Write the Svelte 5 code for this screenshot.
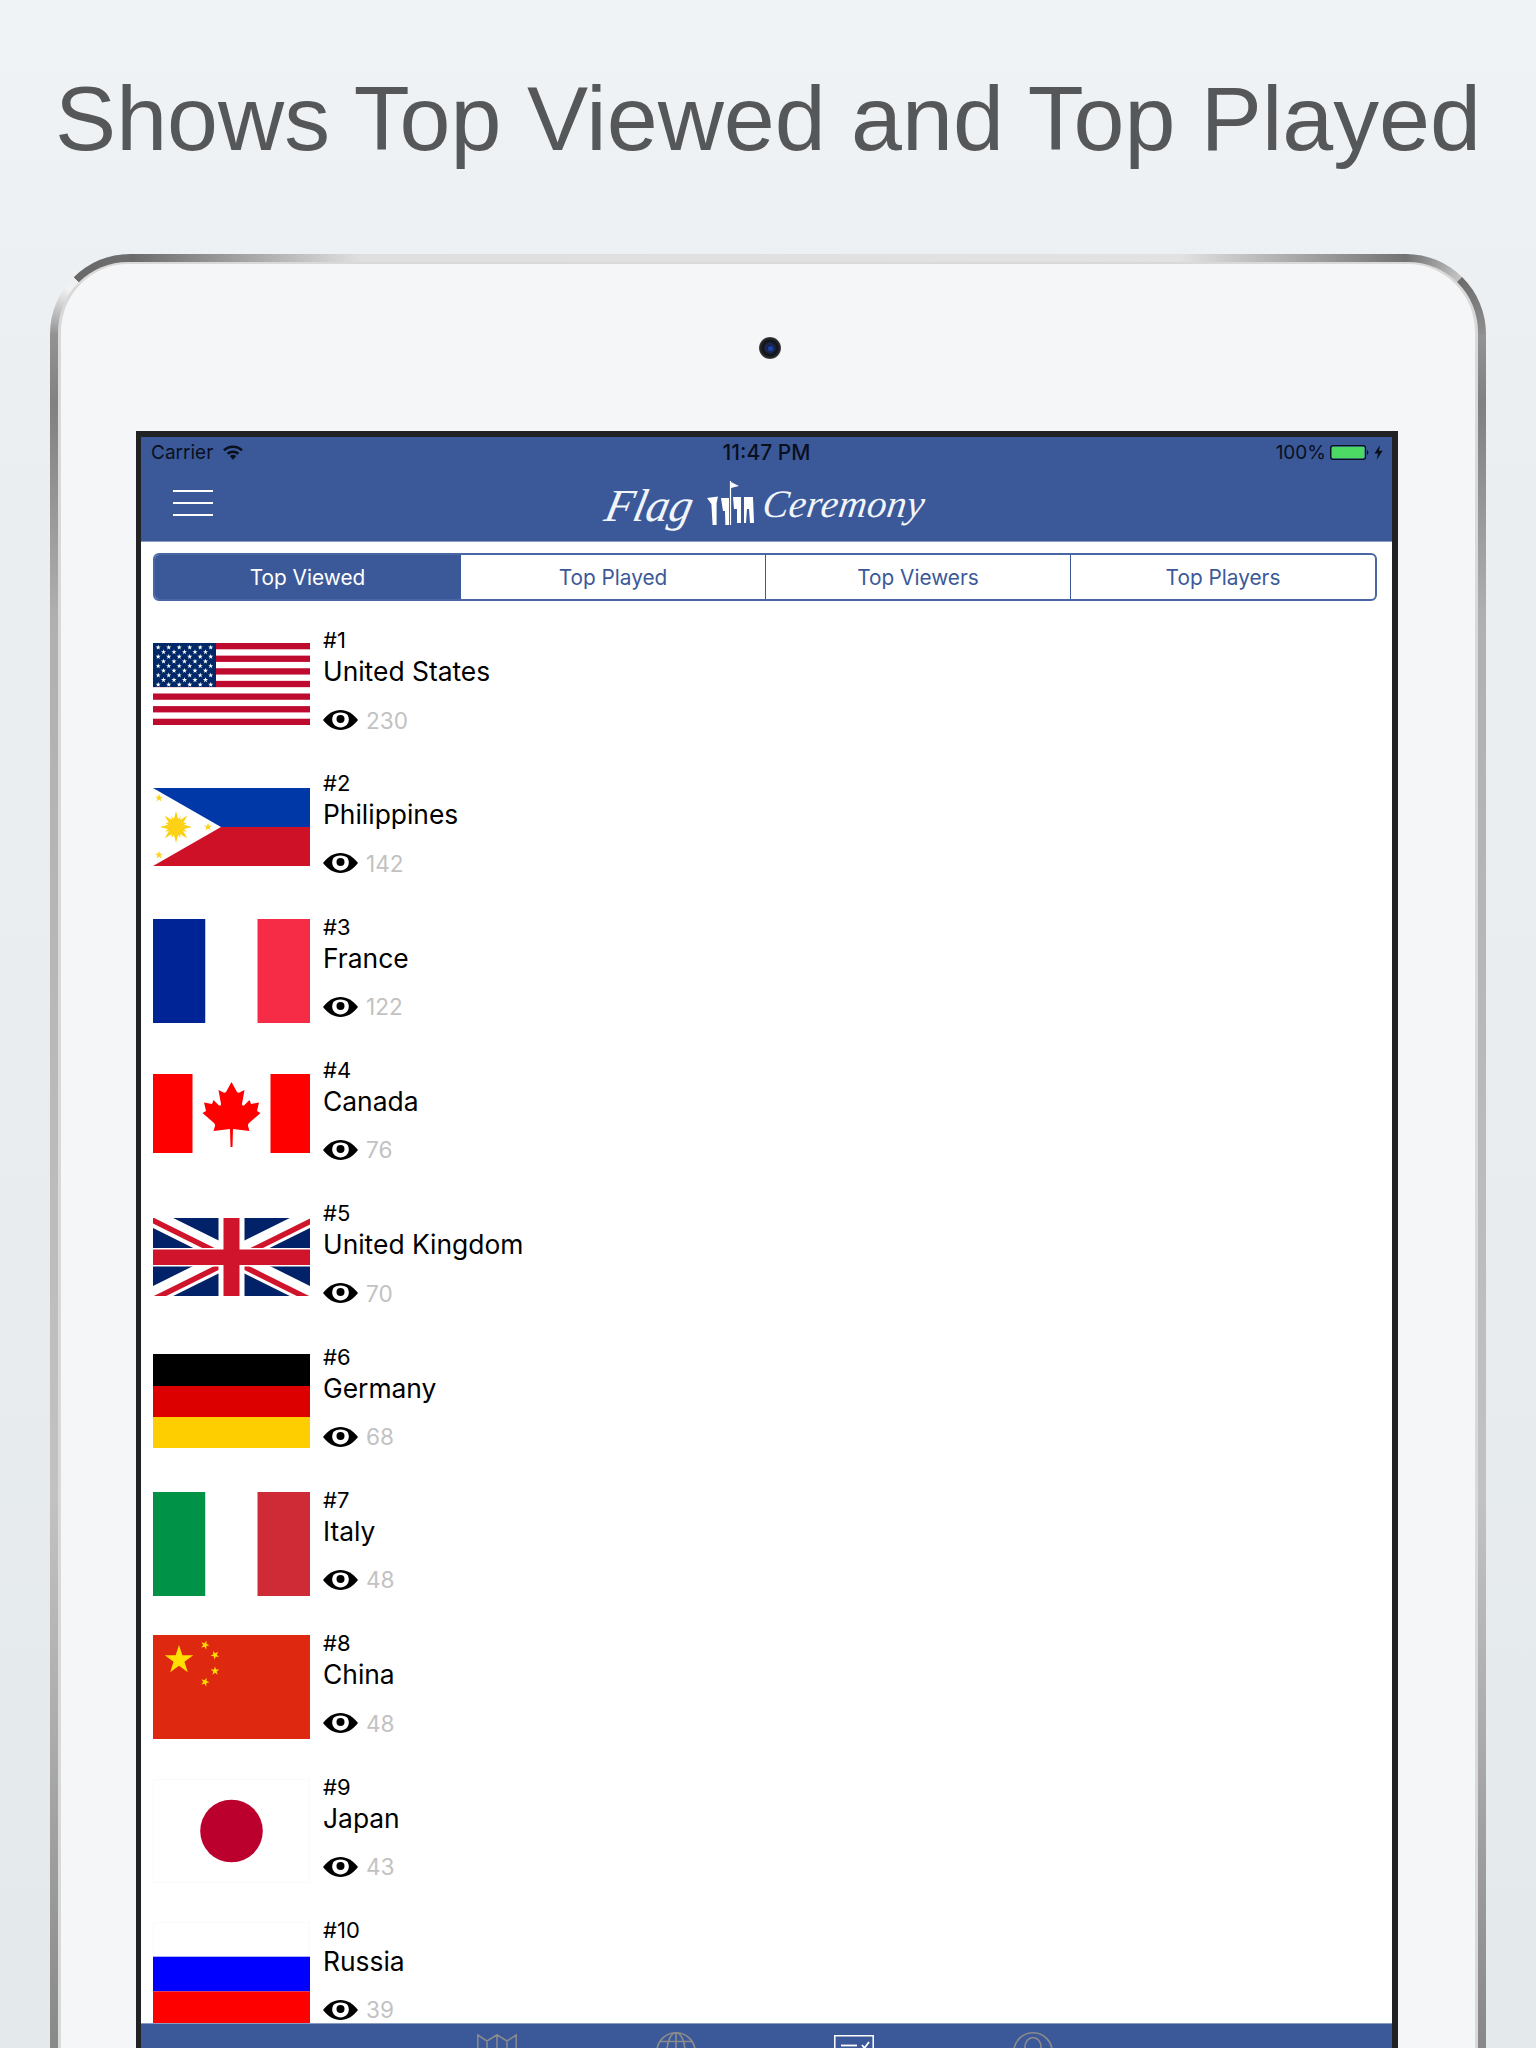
<script>
  const rows = [
    { n: 1, name: 'United States', views: 230, flag: 'us' },
    { n: 2, name: 'Philippines', views: 142, flag: 'ph' },
    { n: 3, name: 'France', views: 122, flag: 'fr' },
    { n: 4, name: 'Canada', views: 76, flag: 'ca' },
    { n: 5, name: 'United Kingdom', views: 70, flag: 'uk' },
    { n: 6, name: 'Germany', views: 68, flag: 'de' },
    { n: 7, name: 'Italy', views: 48, flag: 'it' },
    { n: 8, name: 'China', views: 48, flag: 'cn' },
    { n: 9, name: 'Japan', views: 43, flag: 'jp' },
    { n: 10, name: 'Russia', views: 39, flag: 'ru' }
  ];
  const tabs = ['Top Viewed', 'Top Played', 'Top Viewers', 'Top Players'];
  const star = (cx, cy, r, rot = 0) => {
    const pts = [];
    for (let i = 0; i < 10; i++) {
      const a = ((-90 + rot + i * 36) * Math.PI) / 180;
      const q = i % 2 ? r * 0.382 : r;
      pts.push((cx + q * Math.cos(a)).toFixed(2) + ',' + (cy + q * Math.sin(a)).toFixed(2));
    }
    return pts.join(' ');
  };
  const usStars = [];
  for (let y = 0; y < 9; y++) {
    const count = y % 2 ? 5 : 6;
    for (let x = 0; x < count; x++) {
      usStars.push([(y % 2 ? 10.5 : 5.2) + x * 10.5, 4.4 + y * 4.65]);
    }
  }
  const sunRays = Array.from({ length: 8 }, (_, i) => i * 45);
</script>

<div class="page">
  <h1 class="title">Shows Top Viewed and Top Played</h1>
  <div class="device">
    <div class="face">
      <div class="camera"><span class="lens"></span></div>
      <div class="screen">
        <div class="navbar">
          <div class="status">
            <div class="status-left">
              <span>Carrier</span>
              <svg width="20" height="15" viewBox="0 0 20 15">
                <path d="M1 5.4 A13 13 0 0 1 19 5.4" fill="none" stroke="#0a0f1e" stroke-width="2.6" />
                <path d="M4.6 8.8 A8 8 0 0 1 15.4 8.8" fill="none" stroke="#0a0f1e" stroke-width="2.6" />
                <path d="M6.8 11 Q10 8.4 13.2 11 L10 14.8 Z" fill="#0a0f1e" />
              </svg>
            </div>
            <span class="clock">11:47 PM</span>
            <div class="status-right">
              <span>100%</span>
              <svg class="battery" width="40" height="15" viewBox="0 0 40 15">
                <rect x="0.6" y="0.6" width="35" height="13.8" rx="2.5" fill="none" stroke="#0a0f1e" stroke-width="1.1" />
                <rect x="1.8" y="1.8" width="32.6" height="11.4" rx="1.4" fill="#4cd964" />
                <path d="M37 5 a3 3 0 0 1 0 5 z" fill="#0a0f1e" />
              </svg>
              <svg width="9" height="15" viewBox="0 0 9 15"><path d="M6 0 L0.5 8.4 H4 L2.6 15 L8.6 5.8 H5 Z" fill="#0a0f1e" /></svg>
            </div>
          </div>
          <div class="bar">
            <div class="burger"><i></i><i></i><i></i></div>
            <div class="logo">
              <span class="script flag-word">Flag</span>
              <svg class="guard" width="50" height="46" viewBox="0 0 50 46">
                <path d="M24.5 0 V44" stroke="#ffffff" stroke-width="1.2" />
                <path d="M25 1 L33 5 L25 7 Z" fill="#ffffff" />
                <g fill="#ffffff">
                  <path d="M1 17 L12 15.6 L10.6 22 V44 H6.6 L5.4 23 Z" />
                  <path d="M15 17 H23 V44 H19.4 L19 30 H17 Z" />
                  <path d="M27 16 H35 V42 H31 L31 28 H28 Z" />
                  <path d="M38 16 H47 L48 42 H44 L43 28 H41 L40 42 H38 Z" />
                </g>
              </svg>
              <span class="script cer-word">Ceremony</span>
            </div>
          </div>
        </div>

        <div class="segments">
          {#each tabs as tab, i}
            <div class="segment" class:active={i === 0}>{tab}</div>
          {/each}
        </div>

        <div class="list">
          {#each rows as row}
            <div class="row">
              <div class="flagbox">
                {#if row.flag === 'us'}
                  <svg width="157" height="82" viewBox="0 0 157 82" preserveAspectRatio="none">
                    <rect width="157" height="82" fill="#fff" />
                    {#each [0, 1, 2, 3, 4, 5, 6] as s}
                      <rect y={s * 12.62} width="157" height="6.31" fill="#bf0a30" />
                    {/each}
                    <rect width="63" height="44" fill="#002868" />
                    {#each usStars as p}
                      <polygon points={star(p[0], p[1], 2.7)} fill="#fff" />
                    {/each}
                  </svg>
                {:else if row.flag === 'ph'}
                  <svg width="157" height="78" viewBox="0 0 157 78">
                    <rect width="157" height="39" fill="#0038a8" />
                    <rect y="39" width="157" height="39" fill="#ce1126" />
                    <polygon points="0,0 68,39 0,78" fill="#fff" />
                    <g fill="#fcd116">
                      <circle cx="23" cy="39" r="8.5" />
                      {#each sunRays as r}
                        <polygon points="20.6,32 23,23 25.4,32" transform="rotate({r} 23 39)" />
                        <polygon points="21.6,32 23,27 24.4,32" transform="rotate({r + 22.5} 23 39)" />
                      {/each}
                      <polygon points={star(6, 10, 4.2)} />
                      <polygon points={star(6, 67, 4.2)} />
                      <polygon points={star(55, 39, 4.2)} />
                    </g>
                  </svg>
                {:else if row.flag === 'fr'}
                  <svg width="157" height="104" viewBox="0 0 157 104">
                    <rect width="52.5" height="104" fill="#002395" />
                    <rect x="52.5" width="52" height="104" fill="#fff" />
                    <rect x="104.5" width="52.5" height="104" fill="#f62b45" />
                  </svg>
                {:else if row.flag === 'ca'}
                  <svg width="157" height="79" viewBox="0 0 157 79">
                    <rect width="157" height="79" fill="#fff" />
                    <rect width="39.5" height="79" fill="#ff0000" />
                    <rect x="117.5" width="39.5" height="79" fill="#ff0000" />
                    <path fill="#ff0000" d="M78.5 8 L84 18 Q85.5 19.5 87.5 18 L91.5 16 L89 30 Q89 32.5 91.5 31 L96.5 26 L98 30 L106 28.5 L104 37 L107.5 39 L96 49 Q94.5 51 95 52 L96.5 57 L80 55 L79.5 73 H77.5 L77 55 L60.5 57 L62 52 Q62.5 51 61 49 L49.5 39 L53 37 L51 28.5 L59 30 L60.5 26 L65.5 31 Q68 32.5 68 30 L65.5 16 L69.5 18 Q71.5 19.5 73 18 Z" />
                  </svg>
                {:else if row.flag === 'uk'}
                  <svg width="157" height="78" viewBox="0 0 157 78">
                    <rect width="157" height="78" fill="#012169" />
                    <path d="M0 0 L157 78 M157 0 L0 78" stroke="#fff" stroke-width="18" />
                    <path d="M0 -1 L78.5 38 M78.5 39 L157 78" stroke="#cf142b" stroke-width="5.5" transform="translate(-2 2.5)" />
                    <path d="M157 0 L78.5 39 M78.5 39 L0 78" stroke="#cf142b" stroke-width="5.5" transform="translate(2 2.5)" />
                    <rect x="65.5" width="26" height="78" fill="#fff" />
                    <rect y="30" width="157" height="18.5" fill="#fff" />
                    <rect x="70.5" width="16" height="78" fill="#cf142b" />
                    <rect y="31.5" width="157" height="15.5" fill="#cf142b" />
                  </svg>
                {:else if row.flag === 'de'}
                  <svg width="157" height="94" viewBox="0 0 157 94">
                    <rect width="157" height="32" fill="#000" />
                    <rect y="32" width="157" height="31" fill="#dd0000" />
                    <rect y="63" width="157" height="31" fill="#ffce00" />
                  </svg>
                {:else if row.flag === 'it'}
                  <svg width="157" height="104" viewBox="0 0 157 104">
                    <rect width="52.5" height="104" fill="#009246" />
                    <rect x="52.5" width="52" height="104" fill="#fff" />
                    <rect x="104.5" width="52.5" height="104" fill="#ce2b37" />
                  </svg>
                {:else if row.flag === 'cn'}
                  <svg width="157" height="104" viewBox="0 0 157 104">
                    <rect width="157" height="104" fill="#de2910" />
                    <g fill="#ffde00">
                      <polygon points={star(26, 25, 15)} />
                      <polygon points={star(52, 10, 4.6, 20)} />
                      <polygon points={star(62, 20, 4.6, 45)} />
                      <polygon points={star(62, 36, 4.6, 0)} />
                      <polygon points={star(52, 47, 4.6, 20)} />
                    </g>
                  </svg>
                {:else if row.flag === 'jp'}
                  <svg width="157" height="104" viewBox="0 0 157 104">
                    <rect x="0.5" y="0.5" width="156" height="103" fill="#fff" stroke="#fafafa" />
                    <circle cx="78.5" cy="52" r="31.3" fill="#bc002d" />
                  </svg>
                {:else}
                  <svg width="157" height="104" viewBox="0 0 157 104">
                    <rect x="0.5" y="0.5" width="156" height="34.5" fill="#fff" stroke="#fafafa" />
                    <rect y="34.7" width="157" height="34.7" fill="#0000ff" />
                    <rect y="69.4" width="157" height="34.7" fill="#ff0000" />
                  </svg>
                {/if}
              </div>
              <div class="info">
                <div class="rank">#{row.n}</div>
                <div class="name">{row.name}</div>
                <div class="views">
                  <svg width="35" height="20" viewBox="0 0 35 20">
                    <path fill="#000" d="M0 10 C5 3.4 11 0 17.5 0 S30 3.4 35 10 C30 16.6 24 20 17.5 20 S5 16.6 0 10 Z" />
                    <path fill="#fff" d="M10.4 5 C9.6 6.4 9.2 8 9.2 9.6 C9.2 14.2 12.9 17.4 17.5 17.4 S25.8 14.2 25.8 9.6 C25.8 8 25.4 6.4 24.6 5 C23.2 3.4 20.6 2.4 17.5 2.4 S11.8 3.4 10.4 5 Z" />
                    <circle cx="17.5" cy="9" r="4" fill="#000" />
                  </svg>
                  <span>{row.views}</span>
                </div>
              </div>
            </div>
          {/each}
        </div>

        <div class="tabbar">
          <svg class="map" width="40" height="25" viewBox="0 0 40 25" fill="none" stroke="#8c8c8c" stroke-width="1.5">
            <path d="M0.8 25 V1 L10 7 L20 0.8 L30 7 L39.2 1 V25 M10 7 V25 M20 0.8 V25 M30 7 V25" />
          </svg>
          <svg width="40" height="25" viewBox="0 0 40 25" fill="none" stroke="#8c8c8c" stroke-width="1.6">
            <circle cx="20" cy="20" r="19.2" />
            <ellipse cx="20" cy="20" rx="9" ry="19.2" />
            <path d="M20 0.8 V25 M4 9.5 H36 M0.8 20 H39.2" />
          </svg>
          <svg class="form" width="40" height="22" viewBox="0 0 40 22" fill="none" stroke="#ffffff" stroke-width="1.5">
            <path d="M0.8 22 V0.8 H39.2 V22" />
            <path d="M7 10.5 H23" stroke-width="1.8" />
            <path d="M28 10 L30.5 13 L35 7" stroke-width="1.8" />
          </svg>
          <svg width="40" height="25" viewBox="0 0 40 25" fill="none" stroke="#8c8c8c" stroke-width="1.6">
            <circle cx="20" cy="20" r="19.2" />
            <path d="M12 25 V15 A8 9.5 0 0 1 28 15 V25" />
          </svg>
        </div>
      </div>
    </div>
  </div>
</div>

<style>
  :global(body) {
    margin: 0;
    background: #e8ecef;
  }
  .page {
    height: 2048px;
    overflow: hidden;
    background: linear-gradient(180deg, #f0f3f5 0%, #eceff1 20%, #e4e9ec 100%);
    font-family: Inter, "Noto Sans", sans-serif;
  }
  .title {
    margin: 0;
    height: 254px;
    box-sizing: border-box;
    padding-top: 63px;
    font-family: "Liberation Sans", Arial, sans-serif;
    font-weight: 400;
    font-size: 91.6px;
    line-height: 110px;
    color: #555759;
    text-align: center;
    white-space: nowrap;
  }
  .device {
    margin: 0 50px;
    height: 1900px;
    box-sizing: border-box;
    padding: 8px 8px 0;
    border-radius: 80px 80px 0 0;
    background:
      conic-gradient(from 270deg at 80px 80px, #949494 0deg, #f2f2f2 36deg, #efefef 45deg, #686868 45deg, #6e6e6e 90deg) 0 0 / 80px 80px no-repeat,
      conic-gradient(from 0deg at 0 80px, #727272 0deg, #c4c4c4 44deg, #6c6c6c 45deg, #8e8e8e 90deg) 100% 0 / 80px 80px no-repeat,
      linear-gradient(90deg, #6a6a6a 80px, #dfdfdf 310px, #e2e2e2 1130px, #727272 1356px) 0 0 / 100% 80px no-repeat,
      linear-gradient(180deg, #949494 76px, #808080 152px, #b0b0b0 366px, #c2c2c2 1246px, #aaaaaa 1496px, #888888 1794px) 0 0 / 100% 100% no-repeat;
  }
  .face {
    height: 100%;
    box-sizing: border-box;
    padding-top: 73px;
    border: solid #d9d9d9;
    border-width: 2px 3px 0;
    border-radius: 70px 70px 0 0;
    background: #f5f6f8;
    display: flex;
    flex-direction: column;
    align-items: flex-start;
  }
  .camera {
    width: 22px;
    height: 22px;
    margin-left: 698px;
    border-radius: 50%;
    background: radial-gradient(circle at 50% 50%, #12224c 0 3px, #1d2c58 4px, #101216 7px, #2a2a2c 10px, #55565a 11px);
    display: flex;
    flex: none;
    align-items: center;
    justify-content: center;
  }
  .lens {
    width: 5px;
    height: 5px;
    border-radius: 50%;
    background: #1f45a8;
  }
  .screen {
    flex: none;
    margin-top: 72px;
    margin-left: 75px;
    width: 1262px;
    box-sizing: border-box;
    height: 1623px;
    border-style: solid;
    border-color: #212224;
    border-width: 6px 6px 0 5px;
    background: #fff;
    display: flex;
    flex-direction: column;
    overflow: hidden;
  }
  .navbar {
    flex: none;
    height: 104px;
    background: #3b5998;
    box-shadow: 0 1px 0 #8a9cc2;
    position: relative;
  }
  .status {
    height: 30px;
    display: flex;
    align-items: center;
    justify-content: space-between;
    padding: 0 9px 0 10px;
    position: relative;
    font-size: 19px;
    color: #0a0f1e;
  }
  .status-left,
  .status-right {
    display: flex;
    align-items: center;
    gap: 10px;
  }
  .status-right {
    gap: 4px;
  }
  .clock {
    position: absolute;
    left: 0;
    right: 0;
    text-align: center;
    font-weight: 500;
    font-size: 21px;
  }
  .bar {
    height: 74px;
    position: relative;
  }
  .burger {
    position: absolute;
    left: 32px;
    top: 23px;
    width: 40px;
    display: flex;
    flex-direction: column;
    gap: 10px;
  }
  .burger i {
    display: block;
    height: 2px;
    background: #fff;
  }
  .logo {
    position: absolute;
    left: 465px;
    top: 14px;
    width: 330px;
    height: 46px;
    display: flex;
    align-items: flex-start;
    color: #fff;
  }
  .script {
    font-family: "Liberation Serif", serif;
    font-style: italic;
    line-height: 46px;
    color: #f1f4f9;
    display: inline-block;
  }
  .flag-word {
    width: 100px;
    font-size: 46px;
    margin-top: 2px;
    transform: skewX(-12deg);
  }
  .guard {
    flex: none;
  }
  .cer-word {
    margin-left: 7px;
    font-size: 39px;
    letter-spacing: 0.4px;
    transform: skewX(-8deg);
  }
  .segments {
    flex: none;
    margin: 12px 15px 0 12px;
    height: 48px;
    display: grid;
    grid-template-columns: repeat(4, 1fr);
    box-sizing: border-box;
    border: 2px solid #4a67a5;
    border-radius: 6px;
    overflow: hidden;
  }
  .segment {
    display: flex;
    align-items: center;
    justify-content: center;
    font-size: 20.8px;
    color: #3b5998;
    border-left: 1px solid #3b5998;
  }
  .segment:first-child {
    border-left: 0;
  }
  .segment.active {
    background: #3b5998;
    color: #fff;
  }
  .list {
    flex: 1;
    min-height: 0;
    overflow: hidden;
    margin-top: 10px;
  }
  .row {
    height: 143.33px;
    display: flex;
    align-items: stretch;
    padding-left: 12px;
    gap: 13px;
  }
  .flagbox {
    flex: none;
    width: 157px;
    height: 104px;
    margin-top: 21px;
    display: flex;
    align-items: center;
    justify-content: center;
  }
  .flagbox svg {
    display: block;
  }
  .info {
    display: flex;
    flex-direction: column;
    color: #000;
  }
  .rank {
    font-size: 22px;
    line-height: 28px;
    margin-top: 15px;
  }
  .name {
    font-size: 26.4px;
    line-height: 34px;
  }
  .views {
    display: flex;
    align-items: center;
    gap: 8px;
    margin-top: 19px;
    height: 26px;
    font-size: 22.6px;
    color: #c2c2c2;
  }
  .tabbar {
    flex: none;
    height: 30px;
    box-sizing: border-box;
    background: #3b5998;
    box-shadow: 0 -1px 0 #8a9cc2;
    position: relative;
    padding: 8px 0 0 336px;
    display: flex;
    gap: 138.5px;
    align-items: flex-start;
  }
  .map {
    margin-top: 2px;
  }
  .form {
    margin-top: 3px;
  }
</style>
